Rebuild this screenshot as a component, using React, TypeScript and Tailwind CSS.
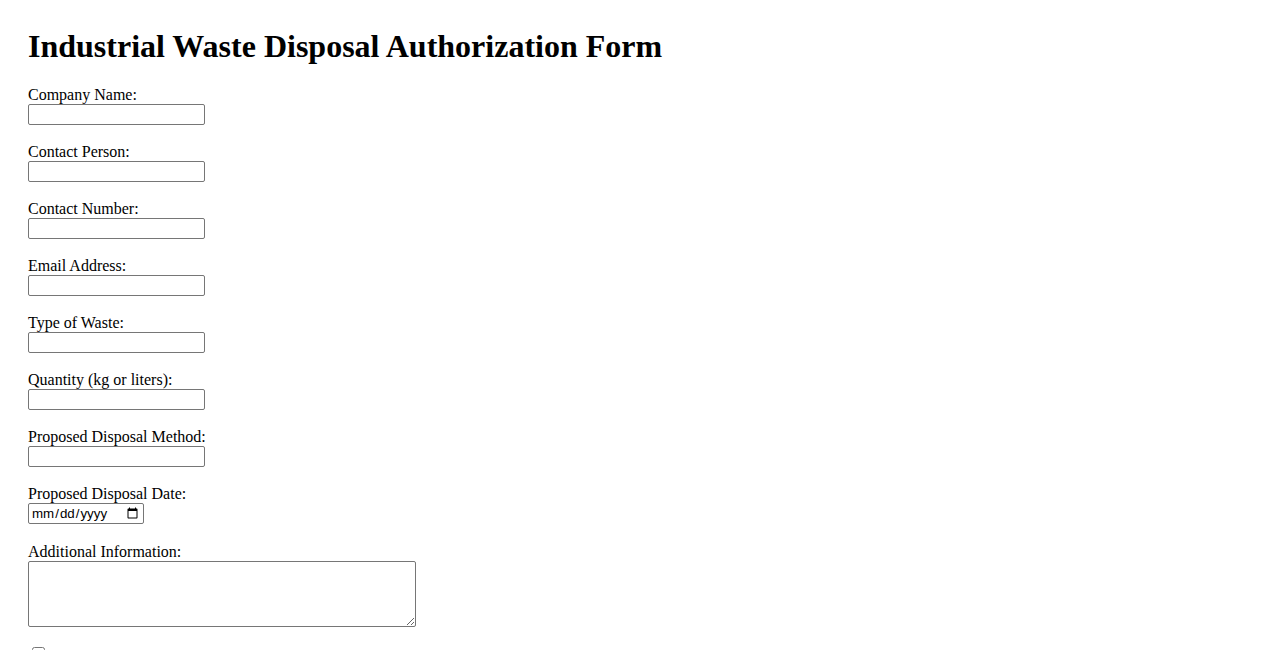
const fields = [
  { id: 'companyName', label: 'Company Name:' },
  { id: 'contactPerson', label: 'Contact Person:' },
  { id: 'contactNumber', label: 'Contact Number:' },
  { id: 'email', label: 'Email Address:' },
  { id: 'wasteType', label: 'Type of Waste:' },
  { id: 'quantity', label: 'Quantity (kg or liters):' },
  { id: 'disposalMethod', label: 'Proposed Disposal Method:' },
];

const inputClass =
  'block box-border h-[21px] rounded-[2px] border border-[#767676] bg-white px-[2px] py-[1px] text-[13.33px] text-black [font-family:Arial,"Liberation_Sans",sans-serif]';

const labelClass = 'block h-[18px] text-[16px] leading-[18.4px]';

export default function App() {
  return (
    <div className="min-h-screen bg-white px-[28px] pt-[28px] text-black [font-family:'Liberation_Serif','Times_New_Roman',serif]">
      <h1 className="mb-[21.44px] text-[32px] font-bold leading-[37px]">
        Industrial Waste Disposal Authorization Form
      </h1>

      <form>
        {fields.map((f) => (
          <div key={f.id} className="mb-[18px]">
            <label htmlFor={f.id} className={labelClass}>
              {f.label}
            </label>
            <input id={f.id} type="text" className={`${inputClass} w-[177px]`} />
          </div>
        ))}

        <div className="mb-[19px]">
          <label htmlFor="disposalDate" className={labelClass}>
            Proposed Disposal Date:
          </label>
          <input id="disposalDate" type="date" className={`${inputClass} w-[116px]`} />
        </div>

        <div className="mb-[17px]">
          <label htmlFor="additionalInfo" className={labelClass}>
            Additional Information:
          </label>
          <textarea
            id="additionalInfo"
            className="block box-border h-[66px] w-[388px] rounded-[2px] border border-[#767676] bg-white px-[2px] py-[2px] text-[13.33px] [font-family:'Liberation_Mono',monospace]"
          />
        </div>

        <div className="flex items-start text-[16px] leading-[18.4px]">
          <input id="certify" type="checkbox" className="ml-[4px] mr-[3px] mt-[3px] h-[13px] w-[13px]" />
          <label htmlFor="certify" className="pt-[12px]">
            I certify that the information provided is accurate and complete.
          </label>
        </div>
      </form>
    </div>
  );
}
